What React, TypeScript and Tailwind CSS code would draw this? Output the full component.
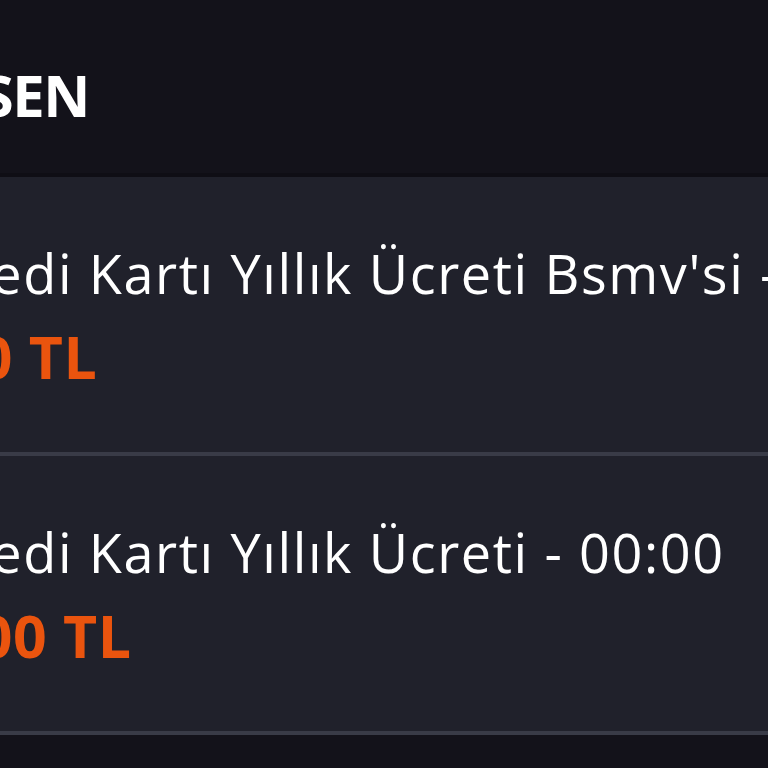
export default function App() {
  const rows = [
    { title: "Kredi Kartı Yıllık Ücreti Bsmv'si - 00:00", amount: "7,50 TL" },
    { title: "Kredi Kartı Yıllık Ücreti - 00:00", amount: "50,00 TL" },
  ];
  return (
    <div className="w-[768px] h-[768px] overflow-hidden bg-[#13121a]" style={{ fontFamily: "'Open Sans', Lato, sans-serif" }}>
      <header className="h-[177px] flex items-center border-b-[4px] border-[#0f0e15] pt-[16px]">
        <h1 className="-ml-[367px] whitespace-nowrap text-[58px] font-bold tracking-tight text-white leading-none">
          HAREKETLER<span className="text-white">SEN</span>
        </h1>
      </header>
      <ul className="bg-[#20212b]">
        {rows.map((r) => (
          <li key={r.title} className="h-[279px] border-b-[4px] border-[#393b47] flex flex-col justify-center">
            <div className="-ml-[67px] whitespace-nowrap text-white text-[54px] leading-[64px] font-normal tracking-[1.6px]">{r.title}</div>
            <div className="-ml-[107px] mt-[19px] whitespace-nowrap text-[#ea540e] text-[59px] leading-[64px] font-bold tracking-[0.5px]">{r.amount}</div>
          </li>
        ))}
      </ul>
    </div>
  );
}
